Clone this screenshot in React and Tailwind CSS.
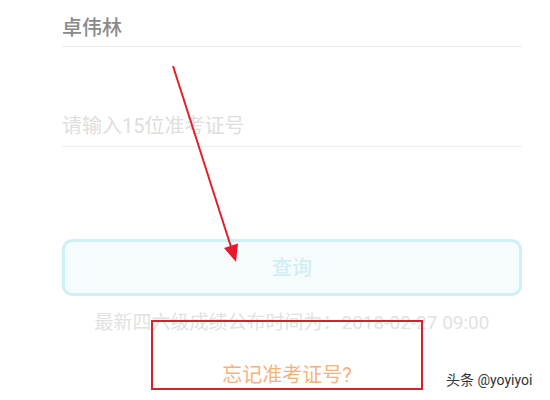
export default function App() {
  const font = { fontFamily: 'Roboto, "Noto Sans CJK SC", "Noto Sans", sans-serif' };
  return (
    <div className="relative w-[550px] h-[400px] bg-white overflow-hidden" style={font}>
      <div className="ml-[62px] w-[460px] flex flex-col">
        <div className="pt-[14px] pb-[4px] border-b border-[#ececec] text-[20px] leading-[28px] font-medium text-[#8a8a8a]">
          卓伟林
        </div>
        <div className="pt-[65px] pb-[6px] border-b border-[#ececec] text-[20px] leading-[28px] text-[#dedede]">
          请输入15位准考证号
        </div>
        <div className="mt-[92px] h-[57px] rounded-[10px] border-[3px] border-[#ccf0f3] bg-[#f6fcfd] flex items-center justify-center text-[20px] font-medium text-[#cfeff2]">
          查询
        </div>
        <div className="mt-[15px] text-center text-[19px] leading-[24px] text-[#e2e2e2]">
          最新四六级成绩公布时间为：2018-02-27 09:00
        </div>
        <div className="mt-[26px] text-center text-[20px] leading-[28px] text-[#f7b27c] pr-[10px]">
          忘记准考证号?
        </div>
      </div>

      <div className="absolute left-[151px] top-[320px] w-[272px] h-[70px] border-2 border-[#d42330]" />

      <svg className="absolute left-0 top-0" width="550" height="400">
        <line x1="173" y1="66" x2="232" y2="250" stroke="#e0202a" strokeWidth="2" />
        <polygon points="236,262 238,243.5 224,248" fill="#e8192a" />
      </svg>

      <div className="absolute left-[446px] top-[370px] text-[14px] leading-[20px] text-[#333]">
        头条 @yoyiyoi
      </div>
    </div>
  );
}
